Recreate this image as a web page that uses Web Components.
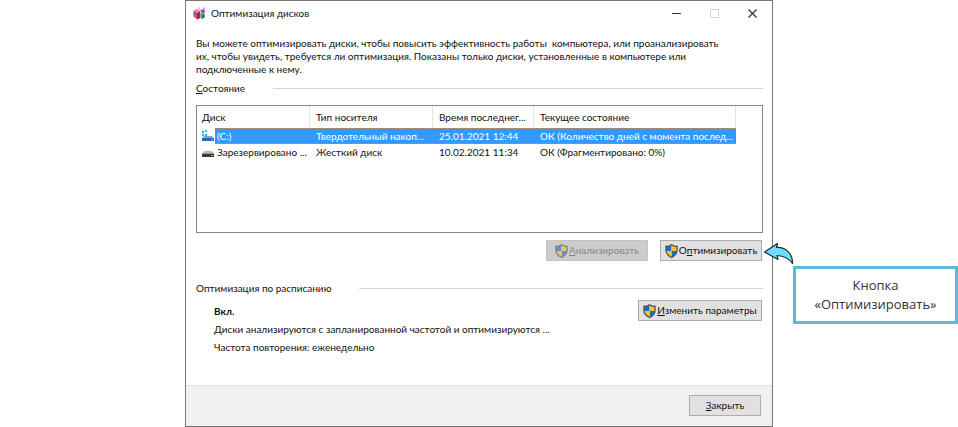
<!DOCTYPE html>
<html lang="ru">
<head>
<meta charset="utf-8">
<title>Оптимизация дисков</title>
<style>
  body { margin: 0; background: #fff; color: #111; font: 10px/13px Lato, "Noto Sans", sans-serif; }
</style>
</head>
<body>
<help-page></help-page>

<script>
function define(name, html, setup) {
  const template = document.createElement('template');
  template.innerHTML = html;
  customElements.define(name, class extends HTMLElement {
    constructor() {
      super();
      this.attachShadow({ mode: 'open' }).append(template.content.cloneNode(true));
    }
    connectedCallback() { if (setup) setup(this, this.shadowRoot); }
  });
}

define('shield-icon', `
<style>:host { display: block; width: 13px; height: 14px; flex: none; } svg { display: block; width: 100%; height: 100%; }</style>
<svg viewBox="0 0 26 28" aria-hidden="true">
  <defs><clipPath id="s"><path d="M13 1.5C10 4 6 5 2 4.500V13c0 7 5 11 11 14 6-3 11-7 11-14V4.500c-4 .5-8-.5-11-3z"/></clipPath></defs>
  <g clip-path="url(#s)">
    <path fill="#1470c8" d="M0 0h13v14H0zM13 14h13v14H13z"/>
    <path fill="#fcc32f" d="M13 0h13v14H13zM0 14h13v14H0z"/>
  </g>
  <path d="M13 1.500C10 4 6 5 2 4.500V13c0 7 5 11 11 14 6-3 11-7 11-14V4.500c-4 .5-8-.5-11-3z" fill="none" stroke="#46525c" stroke-width="2.600"/>
</svg>`);

define('disk-icon', `
<style>
  :host { display: block; width: 13px; height: 13px; flex: none; }
  svg { display: block; width: 100%; height: 100%; }
  .system { display: none; }
  :host([system]) .system { display: inline; }
  :host([system]) .plain { display: none; }
</style>
<svg viewBox="0 0 13 13" aria-hidden="true">
  <g class="system">
    <path fill="#25b6e8" d="M1 1h2v2H1zM4 0h2v2H4zM1 4h2v2H1zM4 4h2v2H4z"/>
    <path fill="#79a9d2" d="M3 6h8l2 3H1z"/><path fill="#286da8" d="M1 8h12v3H1z"/>
    <path fill="#58bde3" d="M10 9h2v1h-2z"/>
  </g>
  <g class="plain">
    <path fill="#b9b9b9" d="M3 5h8l2 3H1z"/><path fill="#3c3c3c" d="M1 8h12v3H1z"/>
    <path fill="#999" d="M1 7h12v1H1z"/><path fill="#65d065" d="M10 9h2v1h-2z"/>
  </g>
</svg>`);

define('defrag-logo', `
<style>:host { display: block; width: 13px; height: 13px; flex: none; } svg { display: block; }</style>
<svg width="13" height="13" viewBox="0 0 26 26" aria-hidden="true">
  <path fill="#e34a64" d="M1 7l8-3 5 4v14l-6 3-7-6z"/>
  <path fill="#b51f42" d="M8 12l6-3v13l-6 3z"/>
  <path fill="#f48fa0" d="M1 7l8-3 5 4-6 4z"/>
  <path fill="#3a77cc" d="M1 10l5 3v5l-5-3z"/>
  <path fill="#6bc04d" d="M14 13l5-2 4 3v7l-6 3-3-3z"/>
  <path fill="#355fae" d="M18 16l5-2v7l-5 3z"/>
  <path fill="#a44ad0" d="M15 6l5-2 4 3-1 6-5-1-3-2z"/>
  <path fill="#e78ae8" d="M20 1h4v4h-4zM11 1h3v3h-3z"/>
</svg>`);

define('push-button', `
<style>
  :host { display: block; }
  button { box-sizing: border-box; width: 100%; height: 21px; margin: 0; padding: 0 4px; display: flex; align-items: center; justify-content: center; gap: 1px;
    border: 1px solid #adadad; outline: 0; background: #e1e1e1; color: #111; font: inherit; white-space: nowrap; }
  button:disabled { background: #ccc; border-color: #c3c3c3; color: #868686; }
  button:disabled shield-icon { opacity: .6; }
  :host(:not([shield])) shield-icon { display: none; }
</style>
<button type="button"><shield-icon></shield-icon><span><slot></slot></span></button>`,
(host, root) => { root.querySelector('button').disabled = host.hasAttribute('disabled'); });

define('title-bar', `
<style>
  :host { display: flex; align-items: center; gap: 5px; height: 25px; padding: 0 7px; }
  h1 { flex: 1; margin: 0; font: inherit; }
  button { width: 38px; height: 25px; padding: 0; border: 0; background: none; display: grid; place-items: center; color: #333; }
  button:disabled { color: #d4d4d4; }
  nav { display: flex; margin-right: -6px; }
  svg { display: block; fill: none; stroke: currentColor; }
</style>
<defrag-logo></defrag-logo>
<h1><slot></slot></h1>
<nav aria-label="Окно">
  <button type="button" aria-label="Свернуть"><svg width="9" height="9"><path d="M0 4.500h9"/></svg></button>
  <button type="button" aria-label="Развернуть" disabled><svg width="9" height="9"><path d="M.5.5h8v8h-8z"/></svg></button>
  <button type="button" aria-label="Закрыть"><svg width="9" height="9"><path d="M.5.5l8 8m0-8l-8 8" stroke-width="1.200"/></svg></button>
</nav>`);

define('group-heading', `
<style>
  :host { display: flex; align-items: center; gap: 28px; height: 16px; }
  h2 { margin: 0; font: inherit; }
  i { flex: 1; height: 1px; background: #d5d5d5; }
</style>
<h2><slot></slot></h2><i></i>`);

define('disk-table', `
<style>
  :host { display: block; box-sizing: border-box; height: 128px; border: 1px solid #828790; background: #fff; }
  table { width: 100%; border-collapse: separate; border-spacing: 0; table-layout: fixed; }
  th, td { padding: 0 0 0 6px; text-align: left; font-weight: 400; white-space: nowrap; }
  th { height: 22px; border-right: 1px solid #e5e5e5; }
  th:last-child { border: 0; }
  td { height: 16px; }
  th:first-child { padding-left: 5px; }
  td:first-child { padding-left: 4px; }
  .drive { display: flex; align-items: center; gap: 1px; height: 16px; }
  .drive span { flex: 1; height: 16px; line-height: 16px; padding-left: 2px; }
  .selected { color: #fff; }
  .selected td:not(:first-child):not(:last-child), .selected span { background: #3399ff; box-shadow: inset 0 1px #a58a72, inset 0 -1px #a58a72; }
  .c1 { width: 113px; } .c2 { width: 123px; } .c3 { width: 101px; } .c5 { width: 26px; }
</style>
<table aria-label="Состояние дисков">
  <colgroup><col class="c1"><col class="c2"><col class="c3"><col><col class="c5"></colgroup>
  <thead><tr><th>Диск</th><th>Тип носителя</th><th>Время последнег...</th><th>Текущее состояние</th><th></th></tr></thead>
  <tbody>
    <tr class="selected"><td><div class="drive"><disk-icon system></disk-icon><span>(C:)</span></div></td><td>Твердотельный накоп...</td><td>25.01.2021 12:44</td><td>ОК (Количество дней с момента послед...</td><td></td></tr>
    <tr><td><div class="drive"><disk-icon></disk-icon><span>Зарезервировано ...</span></div></td><td>Жесткий диск</td><td>10.02.2021 11:34</td><td>ОК (Фрагментировано: 0%)</td><td></td></tr>
  </tbody>
</table>`);

define('call-out', `
<style>
  :host { display: block; position: relative; box-sizing: border-box; border: 3px solid #5bbad5; padding: 7px 4px; background: #fff; color: #333;
    font: 13px/19px "Open Sans", "Noto Sans", sans-serif; text-align: center; }
  svg { position: absolute; left: -33px; top: -29px; display: block; }
</style>
<svg width="32" height="26" viewBox="0 0 32 26" aria-hidden="true">
  <path d="M1.500 12L14.500 3.500L13.500 7.500C22 7 30 13 29.500 23.500C26 18.500 21 16 14 15.500L15 19.500Z" fill="#6fdcff" stroke="#1d2a30" stroke-width="1.200" stroke-linejoin="round"/>
</svg>
<slot></slot>`);

define('disk-window', `
<style>
  :host { display: flex; flex-direction: column; box-sizing: border-box; min-height: 100vh; border: 1px solid #777; background: #fff; }
  main { flex: 1; padding: 11px 9px 28px 10px; }
  p { margin: 0; }
  .intro { margin-bottom: 4px; white-space: pre-line; }
  disk-table { margin-top: 9px; }
  .actions { display: flex; justify-content: flex-end; gap: 12px; margin: 7px 1px 19px 0; }
  .actions push-button { width: 102px; }
  .schedule { display: flex; align-items: flex-start; justify-content: space-between; margin: 4px 1px 0 18px; }
  .schedule div { line-height: 18px; padding-top: 2px; }
  .schedule push-button { width: 124px; }
  footer { display: flex; justify-content: flex-end; padding: 9px 11px 10px; border-top: 1px solid #e2e2e2; background: #f0f0f0; }
  footer push-button { width: 72px; }
</style>
<title-bar>Оптимизация дисков</title-bar>
<main>
  <p class="intro">Вы можете оптимизировать диски, чтобы повысить эффективность работы&nbsp; компьютера, или проанализировать
их, чтобы увидеть, требуется ли оптимизация. Показаны только диски, установленные в компьютере или
подключенные к нему.</p>
  <group-heading><u>С</u>остояние</group-heading>
  <disk-table></disk-table>
  <div class="actions">
    <push-button shield disabled><u>А</u>нализировать</push-button>
    <push-button shield>О<u>п</u>тимизировать</push-button>
  </div>
  <group-heading>Оптимизация по расписанию</group-heading>
  <div class="schedule">
    <div><p><b>Вкл.</b></p><p>Диски анализируются с запланированной частотой и оптимизируются ...</p><p>Частота повторения: еженедельно</p></div>
    <push-button shield><u>И</u>зменить параметры</push-button>
  </div>
</main>
<footer><push-button><u>З</u>акрыть</push-button></footer>`);

define('help-page', `
<style>
  :host { display: grid; grid-template-columns: minmax(0, 1fr) minmax(560px, 588px) minmax(165px, 1fr); min-height: 100vh; }
  disk-window { grid-column: 2; }
  aside { padding: 266px 0 0 20px; }
</style>
<disk-window></disk-window>
<aside><call-out>Кнопка<br>«Оптимизировать»</call-out></aside>`);
</script>
</body>
</html>
